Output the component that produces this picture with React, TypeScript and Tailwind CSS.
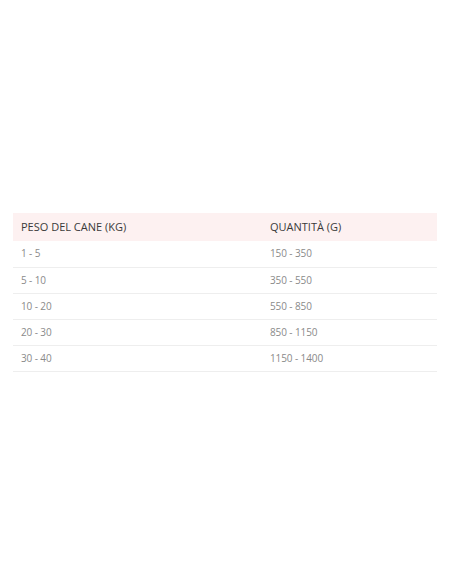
const rows = [
  ['1 - 5', '150 - 350'],
  ['5 - 10', '350 - 550'],
  ['10 - 20', '550 - 850'],
  ['20 - 30', '850 - 1150'],
  ['30 - 40', '1150 - 1400'],
]

export default function App() {
  return (
    <div className="w-[452px] h-[584px] bg-white pt-[213px] px-[13px] font-['Open_Sans',sans-serif]">
      <table className="w-[424px] border-collapse text-left">
        <thead>
          <tr className="bg-[#fdf1f1]">
            <th className="h-[28px] w-[249px] pl-2 text-[11px] font-medium text-[#3a3a3a] align-middle">PESO DEL CANE (KG)</th>
            <th className="h-[28px] pl-2 text-[11px] font-medium text-[#3a3a3a] align-middle">QUANTITÀ (G)</th>
          </tr>
        </thead>
        <tbody>
          {rows.map(([kg, g]) => (
            <tr key={kg} className="border-b border-[#eeeeee]">
              <td className="h-[26px] pl-2 text-[10px] tracking-[-0.1px] text-[#8a8a8a] align-middle">{kg}</td>
              <td className="h-[26px] pl-2 text-[10px] tracking-[-0.1px] text-[#8a8a8a] align-middle">{g}</td>
            </tr>
          ))}
        </tbody>
      </table>
    </div>
  )
}
